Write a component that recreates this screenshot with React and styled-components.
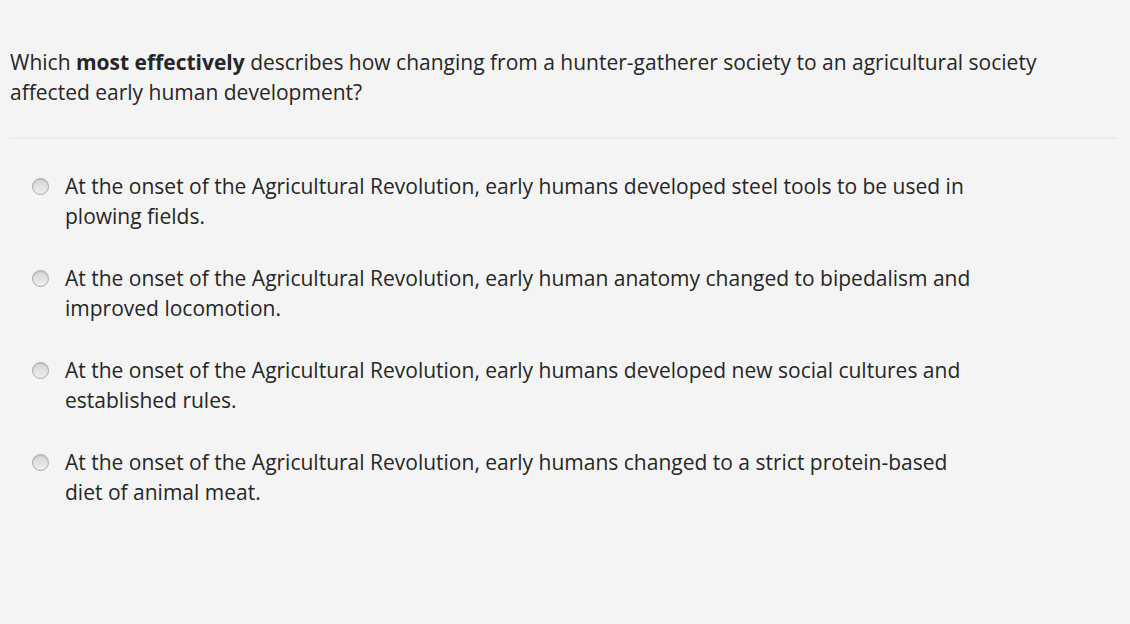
import * as React from 'react'
import styled, { createGlobalStyle } from 'styled-components'

const GlobalStyle = createGlobalStyle`
    html, body {
        margin: 0;
        padding: 0;
        background: #f4f4f4;
    }
    body {
        font-family: "Open Sans", "Liberation Sans", sans-serif;
        color: #262626;
    }
`

const options = [
    'At the onset of the Agricultural Revolution, early humans developed steel tools to be used in plowing fields.',
    'At the onset of the Agricultural Revolution, early human anatomy changed to bipedalism and improved locomotion.',
    'At the onset of the Agricultural Revolution, early humans developed new social cultures and established rules.',
    'At the onset of the Agricultural Revolution, early humans changed to a strict protein-based diet of animal meat.',
]

// Styled Components
const StyledPage = styled.div`
    width: 1130px;
    min-height: 624px;
    box-sizing: border-box;
    padding: 47px 14px 0 10px;
`

const StyledQuestion = styled.p`
    margin: 0;
    max-width: 1090px;
    font-size: 21px;
    line-height: 30px;

    strong {
        font-weight: 700;
    }
`

const StyledDivider = styled.hr`
    margin: 30px 0 0 0;
    border: none;
    height: 2px;
    background: #ebebeb;
`

const StyledList = styled.ul`
    list-style: none;
    margin: 0;
    padding: 32px 0 0 22px;
    display: flex;
    flex-direction: column;
    gap: 32px;
`

const StyledOption = styled.li`
    display: flex;
    align-items: flex-start;
    gap: 16px;
    cursor: pointer;
`

const StyledRadio = styled.span`
    flex: none;
    width: 15px;
    height: 15px;
    margin-top: 7px;
    border-radius: 50%;
    border: 1px solid #a9a9a9;
    background: linear-gradient(to bottom, #d6d6d6, #eeeeee);
    box-shadow: inset 0 1px 1px rgba(0, 0, 0, 0.12);
`

const StyledOptionText = styled.span`
    width: 915px;
    font-size: 21px;
    line-height: 30px;
`

const App = () => {
    return (
        <>
            <GlobalStyle />
            <StyledPage>
                <StyledQuestion>
                    Which <strong>most effectively</strong> describes how changing from a hunter-gatherer society to an agricultural society affected early human development?
                </StyledQuestion>
                <StyledDivider />
                <StyledList>
                    {options.map((text) => (
                        <StyledOption key={text}>
                            <StyledRadio />
                            <StyledOptionText>{text}</StyledOptionText>
                        </StyledOption>
                    ))}
                </StyledList>
            </StyledPage>
        </>
    )
}

export default App
